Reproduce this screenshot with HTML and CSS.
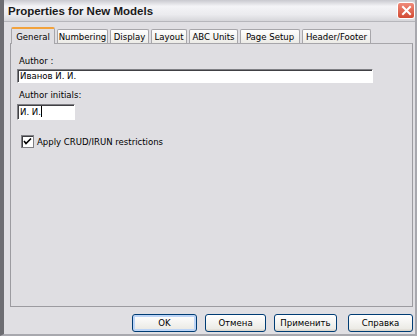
FILE: index.html
```html
<!DOCTYPE html>
<html lang="en">
<head>
    <meta charset="UTF-8">
    <title>Properties for New Models</title>
    <link rel="stylesheet" href="styles.css">
</head>
<body>
    <div class="window">
        <div class="titlebar">
            <span class="title">Properties for New Models</span>
            <span class="closeBtn">
                <svg width="11" height="11" viewBox="0 0 11 11">
                    <path d="M2 2 L9 9 M9 2 L2 9" stroke="#fff" stroke-width="2" stroke-linecap="square"/>
                </svg>
            </span>
        </div>

        <div class="content">
            <div class="tabs">
                <span class="tab active">General</span>
                <span class="tab">Numbering</span>
                <span class="tab">Display</span>
                <span class="tab">Layout</span>
                <span class="tab">ABC Units</span>
                <span class="tab">Page Setup</span>
                <span class="tab">Header/Footer</span>
            </div>

            <div class="panel">
                <label>Author :</label>
                <div class="textbox wide">Иванов И. И.</div>

                <label class="second">Author initials:</label>
                <div class="textbox short">И. И.<span class="caret"></span></div>

                <div class="check">
                    <span class="box">
                        <svg width="9" height="9" viewBox="0 0 9 9">
                            <path d="M1 4 L3 6.5 L8 1.5" stroke="#000" stroke-width="1.6" fill="none"/>
                        </svg>
                    </span>
                    <span>Apply CRUD/IRUN restrictions</span>
                </div>
            </div>

            <div class="buttons">
                <span class="btn default">OK</span>
                <span class="btn">Отмена</span>
                <span class="btn">Применить</span>
                <span class="btn">Справка</span>
            </div>
        </div>
    </div>
</body>
</html>
```

FILE: styles.css
```css
body {
    margin: 0;
    font-family: "DejaVu Sans Condensed", "Liberation Sans", Arial, sans-serif;
    font-size: 9.5px;
    color: #000;
    background: #e0dfe3;
}

.window {
    width: 417px;
    height: 336px;
    box-sizing: border-box;
    border-left: 4px solid #6d6d72;
    border-right: 2px solid #a8a8ae;
    border-bottom: 2px solid #a8a8ae;
    background: #e0dfe3;
    display: flex;
    flex-direction: column;
}

.titlebar {
    height: 21px;
    display: flex;
    align-items: center;
    justify-content: space-between;
    padding: 0 0 0 4px;
    background: linear-gradient(to bottom, #c9c9cf 0%, #f4f4f7 30%, #ebebee 70%, #d6d6da 100%);
    border-bottom: 1px solid #b6b6bb;
}

.title {
    font-family: "Liberation Sans", Arial, sans-serif;
    font-size: 11.5px;
    font-weight: bold;
    color: #1a1a1a;
}

.closeBtn {
    width: 16px;
    height: 15px;
    display: flex;
    align-items: center;
    justify-content: center;
    border-radius: 3px;
    border: 1px solid #ffffff;
    background: linear-gradient(to bottom, #f08a7a, #d24a32);
}

.content {
    flex: 1;
    padding: 4px 2px 0 6px;
    display: flex;
    flex-direction: column;
}

.tabs {
    display: flex;
    align-items: flex-end;
    gap: 2px;
    padding-left: 1px;
    height: 17px;
    white-space: nowrap;
}

.tab {
    box-sizing: border-box;
    height: 14px;
    line-height: 13px;
    text-align: center;
    border: 1px solid #a7a6aa;
    border-bottom: none;
    border-radius: 2px 2px 0 0;
    background: linear-gradient(to bottom, #fefefe, #ecebe6);
}

.tab:nth-child(1) { width: 44px; }
.tab:nth-child(2) { width: 51px; }
.tab:nth-child(3) { width: 39px; }
.tab:nth-child(4) { width: 36px; }
.tab:nth-child(5) { width: 49px; }
.tab:nth-child(6) { width: 60px; }
.tab:nth-child(7) { width: 69px; }

.tab.active {
    height: 17px;
    line-height: 15px;
    border-top: 2px solid #f2a23c;
    background: #e0dfe3;
    margin-bottom: -1px;
    position: relative;
}

.panel {
    box-sizing: border-box;
    height: 264px;
    border: 1px solid #9c9ba0;
    border-top-color: #a7a6aa;
    padding: 11px 6px;
    display: flex;
    flex-direction: column;
    align-items: flex-start;
    background: #dfdee2;
}

.panel label {
    display: block;
    line-height: 12px;
    margin: 0 0 2px 2px;
}

.panel label.second {
    margin-top: 6px;
}

.textbox {
    box-sizing: border-box;
    height: 14px;
    line-height: 12px;
    padding: 0 2px;
    background: #fff;
    border: 1px solid #ffffff;
    border-top-color: #7f7f84;
    border-left-color: #7f7f84;
    box-shadow: inset 1px 1px 0 #404044;
}

.textbox.wide {
    width: 356px;
}

.textbox.short {
    width: 58px;
    height: 16px;
    line-height: 14px;
    margin-top: 1px;
}

.caret {
    display: inline-block;
    width: 1px;
    height: 11px;
    background: #000;
    vertical-align: -2px;
}

.check {
    display: flex;
    align-items: center;
    gap: 3px;
    margin: 15px 0 0 4px;
}

.box {
    box-sizing: border-box;
    width: 13px;
    height: 13px;
    background: #fff;
    border: 1px solid #7f7f84;
    box-shadow: inset 1px 1px 0 #404044;
    display: flex;
    align-items: center;
    justify-content: center;
}

.buttons {
    display: flex;
    justify-content: flex-end;
    gap: 8px;
    padding: 7px 0 0;
}

.btn {
    box-sizing: border-box;
    width: 63px;
    height: 18px;
    line-height: 16px;
    text-align: center;
    border: 1px solid #003c74;
    border-radius: 3px;
    background: linear-gradient(to bottom, #ffffff, #ecebe6 85%, #d6d0c5);
}

.btn:nth-child(1) { width: 65px; }
.btn:nth-child(2) { width: 61px; }
.btn:last-child { width: 65px; margin-left: 3px; }

.btn.default {
    box-shadow: inset 0 0 0 2px #bcd4f6;
}
```
